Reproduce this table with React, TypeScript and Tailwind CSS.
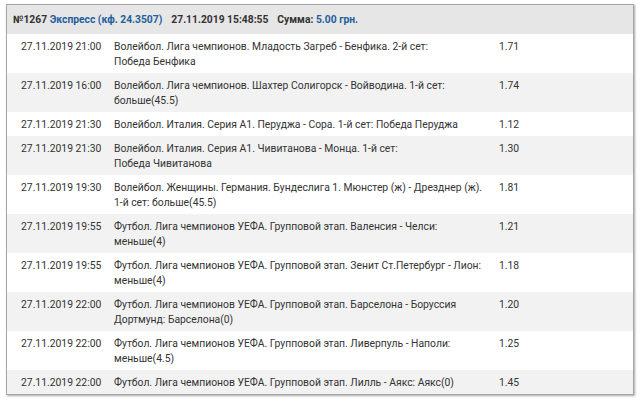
import React from "react";

type Bet = {
  date: string;
  lines: string[];
  coef: string;
};

const bets: Bet[] = [
  { date: "27.11.2019 21:00", lines: ["Волейбол. Лига чемпионов. Младость Загреб - Бенфика. 2-й сет:", "Победа Бенфика"], coef: "1.71" },
  { date: "27.11.2019 16:00", lines: ["Волейбол. Лига чемпионов. Шахтер Солигорск - Войводина. 1-й сет:", "больше(45.5)"], coef: "1.74" },
  { date: "27.11.2019 21:30", lines: ["Волейбол. Италия. Серия А1. Перуджа - Сора. 1-й сет: Победа Перуджа"], coef: "1.12" },
  { date: "27.11.2019 21:30", lines: ["Волейбол. Италия. Серия А1. Чивитанова - Монца. 1-й сет:", "Победа Чивитанова"], coef: "1.30" },
  { date: "27.11.2019 19:30", lines: ["Волейбол. Женщины. Германия. Бундеслига 1. Мюнстер (ж) - Дрезднер (ж).", "1-й сет: больше(45.5)"], coef: "1.81" },
  { date: "27.11.2019 19:55", lines: ["Футбол. Лига чемпионов УЕФА. Групповой этап. Валенсия - Челси:", "меньше(4)"], coef: "1.21" },
  { date: "27.11.2019 19:55", lines: ["Футбол. Лига чемпионов УЕФА. Групповой этап. Зенит Ст.Петербург - Лион:", "меньше(4)"], coef: "1.18" },
  { date: "27.11.2019 22:00", lines: ["Футбол. Лига чемпионов УЕФА. Групповой этап. Барселона - Боруссия", "Дортмунд: Барселона(0)"], coef: "1.20" },
  { date: "27.11.2019 22:00", lines: ["Футбол. Лига чемпионов УЕФА. Групповой этап. Ливерпуль - Наполи:", "меньше(4.5)"], coef: "1.25" },
  { date: "27.11.2019 22:00", lines: ["Футбол. Лига чемпионов УЕФА. Групповой этап. Лилль - Аякс: Аякс(0)"], coef: "1.45" },
];

export default function App() {
  return (
    <div className="w-[644px] h-[403px] bg-white pt-[4px] pl-[6px] font-['Roboto',sans-serif] text-[#333]">
      <div className="w-[628px] border border-[#a6a6a6] shadow-[1px_1px_2px_rgba(0,0,0,0.35)]">
        {/* шапка */}
        <div className="flex items-center gap-[9px] h-[29px] bg-[#e6e6e6] pl-[6px] text-[10.3px] font-bold text-[#333]">
          <span>
            №1267 <span className="text-[#1f5f9c]">Экспресс (кф. 24.3507)</span>
          </span>
          <span>27.11.2019 15:48:55</span>
          <span>
            Сумма: <span className="text-[#1f5f9c]">5.00 грн.</span>
          </span>
        </div>

        {/* события */}
        {bets.map((bet, i) => (
          <div
            key={i}
            className={`flex py-[4.5px] text-[10.35px] leading-[15px] ${i % 2 === 0 ? "bg-white" : "bg-[#f2f2f2]"}`}
          >
            <div className="w-[107px] shrink-0 pl-[14px] whitespace-nowrap">{bet.date}</div>
            <div className="w-[385px] shrink-0">
              {bet.lines.map((line, j) => (
                <div key={j} className="whitespace-nowrap">{line}</div>
              ))}
            </div>
            <div className="flex-1">{bet.coef}</div>
          </div>
        ))}
      </div>
    </div>
  );
}
